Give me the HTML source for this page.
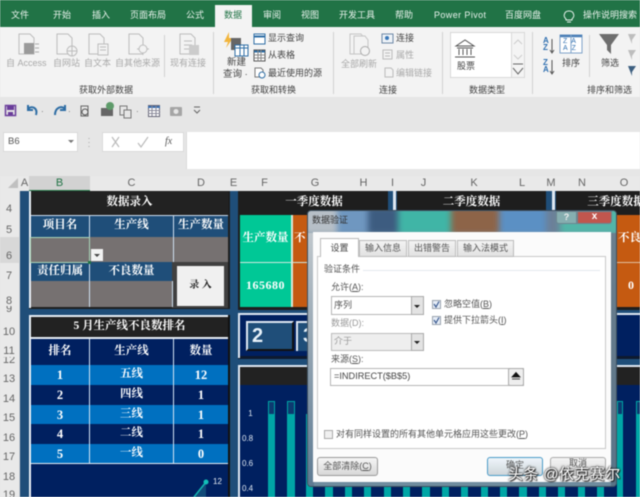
<!DOCTYPE html>
<html><head><meta charset="utf-8">
<style>
html,body{margin:0;padding:0;background:#e6e6e6}
#r{position:relative;width:640px;height:497px;overflow:hidden;font-family:"Liberation Sans","Noto Sans CJK SC",sans-serif;filter:blur(.45px)}
#r div,#r span.a{position:absolute;box-sizing:border-box}
.t{white-space:nowrap;line-height:1}
.c{text-align:center;white-space:nowrap;line-height:1}
.tab{color:#e8f2ec;font-size:9px;top:11px}
.g{color:#a9a9a9;font-size:9px}
.k{color:#444;font-size:9px}
.s{font-family:"Liberation Serif","Noto Serif CJK SC",serif;font-weight:bold;color:#fff}
.h{color:#666;font-size:11px}
.d{color:#555;font-size:9px}
.sep{background:#d0d0d0;width:1px;top:32px;height:62px}
.n{font-size:12.500px}
.x{font-size:11.500px}
svg{position:absolute;overflow:visible}
</style></head><body><div id="r">

<!-- tabs -->
<div style="left:0;top:0;width:640px;height:27px;background:#217346"></div>
<div style="left:215px;top:5px;width:37px;height:22px;background:#f3f3f3"></div>
<div class="t tab" style="left:11px">文件</div>
<div class="t tab" style="left:53px">开始</div>
<div class="t tab" style="left:92px">插入</div>
<div class="t tab" style="left:130px">页面布局</div>
<div class="t tab" style="left:186px">公式</div>
<div class="t tab" style="left:224px;color:#217346">数据</div>
<div class="t tab" style="left:263px">审阅</div>
<div class="t tab" style="left:301px">视图</div>
<div class="t tab" style="left:339px">开发工具</div>
<div class="t tab" style="left:395px">帮助</div>
<div class="t tab" style="left:434px;letter-spacing:.4px">Power Pivot</div>
<div class="t tab" style="left:505px">百度网盘</div>
<svg style="left:563px;top:9px" width="12" height="15"><path d="M3 10C1 8 1 6 1.500 5 2.500 1 9.500 1 10.500 5 11 6 11 8 9 10V11H3ZM4 13H8" fill="none" stroke="#e8f2ec"/></svg>
<div class="t tab" style="left:583px">操作说明搜索</div>

<!-- ribbon -->
<div style="left:0;top:27px;width:640px;height:70px;background:#f3f3f3"></div>
<div class="sep" style="left:213px"></div><div class="sep" style="left:333px"></div><div class="sep" style="left:442px"></div><div class="sep" style="left:532px"></div>
<div class="sep" style="left:164px;top:35px;height:42px"></div>
<div class="sep" style="left:589px;top:35px;height:42px"></div>

<!-- doc icons -->
<svg style="left:0;top:0" width="640" height="97" fill="none" stroke="#bdbdbd">
<path d="M19 34H30L34 38V54H19Z"/><rect x="24" y="43" width="10" height="11" fill="#9a9a9a" stroke="none"/><path d="M35 44H39M35 48H39M35 52H39" stroke="#aaa"/>
<path d="M57 34H68L72 38V54H57Z"/><circle cx="72" cy="51" r="5" fill="#f3f3f3"/><path d="M67 51H77M72 46V56"/>
<path d="M89 34H100L104 38V54H89Z"/><rect x="98" y="44" width="10" height="11" fill="#f3f3f3"/><path d="M100 47H106M100 50H106"/>
<path d="M129 34H139L143 38V54H129Z"/><circle cx="143" cy="49" r="4" fill="#f3f3f3"/><path d="M143 43V45M143 53V55M137 49H139M147 49H149"/>
<path d="M180 34H191L195 38V54H180ZM184 41H192M184 45H192M184 49H192"/><rect x="189" y="45" width="10" height="10" fill="#ccc" stroke="none"/>
</svg>
<div class="t g" style="left:6px;top:59px">自 Access</div>
<div class="t g" style="left:53px;top:59px">自网站</div>
<div class="t g" style="left:84px;top:59px">自文本</div>
<div class="t g" style="left:115px;top:59px">自其他来源</div>
<div class="t g" style="left:170px;top:59px">现有连接</div>
<div class="t k" style="left:79px;top:86px">获取外部数据</div>

<svg style="left:0;top:0" width="640" height="97" fill="none">
<path d="M229 32L224 42H228L226 48L233 38H229Z" fill="#f2b53c"/>
<path d="M231 38H241V50H231Z" fill="#666"/>
<rect x="235" y="45" width="13" height="11" fill="#fff" stroke="#2e6da4"/><path d="M235 48H248M240 45V56M244 45V56" stroke="#2e6da4"/>
<rect x="254" y="34" width="11" height="10" fill="#fff" stroke="#2e6da4"/><path d="M254 36.500H265" stroke="#2e6da4" stroke-width="2"/>
<rect x="254" y="50" width="11" height="11" fill="#fff" stroke="#555"/><path d="M254 51.500H265" stroke="#2e6da4" stroke-width="2"/><path d="M254 55H265M254 58H265M258 50V61M261 50V61" stroke="#888"/>
<path d="M255 68H261L263 70V77H255Z" stroke="#777" fill="#fff"/><circle cx="262" cy="75" r="3" fill="#fff" stroke="#2e6da4"/>
</svg>
<div class="t" style="left:227px;top:58px;font-size:9.500px;color:#444">新建</div>
<div class="t" style="left:223px;top:70px;font-size:9.500px;color:#444">查询 ·</div>
<div class="t k" style="left:268px;top:34px">显示查询</div>
<div class="t k" style="left:268px;top:51px">从表格</div>
<div class="t k" style="left:268px;top:69px">最近使用的源</div>
<div class="t k" style="left:251px;top:86px">获取和转换</div>

<svg style="left:0;top:0" width="640" height="97" fill="none">
<path d="M350 34H361L364 38V54H350Z" stroke="#c4c4c4"/><path d="M354 36H365L368 40V54H354Z" stroke="#c4c4c4" fill="#f3f3f3"/><circle cx="365" cy="51" r="4.500" stroke="#aaa" fill="#f3f3f3"/>
<rect x="382" y="34" width="11" height="9" fill="#eef3f8" stroke="#6c87a6"/><circle cx="387" cy="38" r="2" fill="#3b78b8"/>
<rect x="383" y="50" width="9" height="9" stroke="#bbb"/><path d="M385 53H390M385 56H390" stroke="#bbb"/>
<path d="M385 68H391L393 70V77H385Z" stroke="#bbb"/>
</svg>
<div class="t g" style="left:341px;top:60px">全部刷新</div>
<div class="t k" style="left:396px;top:34px">连接</div>
<div class="t g" style="left:396px;top:51px">属性</div>
<div class="t g" style="left:396px;top:69px">编辑链接</div>
<div class="t k" style="left:379px;top:86px">连接</div>

<div style="left:450px;top:32px;width:62px;height:46px;background:#fff;border:1px solid #d8d8d8"></div>
<div style="left:511px;top:32px;width:14px;height:46px;background:#f4f4f4;border:1px solid #d8d8d8"></div>
<svg style="left:0;top:0" width="640" height="97" fill="none">
<path d="M456 46L465 40 474 46ZM457 48H473M459 49V55M463 49V55M467 49V55M471 49V55M455 57H475" stroke="#555"/>
<path d="M514 44L518 40 522 44M514 55L518 59 522 55" stroke="#ccc"/>
<path d="M513 64H523M513 68L518 74 523 68" stroke="#666"/>
</svg>
<div class="t k" style="left:457px;top:62px">股票</div>
<div class="t k" style="left:469px;top:86px">数据类型</div>

<div class="t" style="left:543px;top:37px;font-size:8px;font-weight:bold;color:#2f6fb0;line-height:7px">A<br>Z</div>
<div class="t" style="left:543px;top:59px;font-size:8px;font-weight:bold;color:#2f6fb0;line-height:7px">Z<br>A</div>
<svg style="left:0;top:0" width="640" height="97" fill="none">
<path d="M552 39V52M550 50L552 53 554 50M552 60V73M550 71L552 74 554 71" stroke="#555"/>
<rect x="560" y="35" width="22" height="18" fill="#fff" stroke="#7fa3c9"/><path d="M560 36H582" stroke="#4a7fb6" stroke-width="2.500"/><path d="M571 35V53" stroke="#7fa3c9"/>
<path d="M599 34H619L611 45V54L607 50V45Z" fill="#6e6e6e"/>
<path d="M628 34H636L632 40V44Z" fill="#bdbdbd"/><path d="M628 50H636L632 56V60Z" fill="#bdbdbd"/><path d="M628 66H636L632 72V76Z" fill="#3d5f80"/>
</svg>
<div class="t" style="left:563px;top:38px;font-size:7px;color:#2f6fb0;line-height:7px;letter-spacing:4px">ZA<br>AZ</div>
<div class="t k" style="left:562px;top:59px">排序</div>
<div class="t k" style="left:601px;top:59px">筛选</div>
<div class="t k" style="left:587px;top:86px">排序和筛选</div>

<!-- qat -->
<svg style="left:0;top:0" width="640" height="130" fill="none">
<rect x="5.500" y="105.500" width="10" height="10" stroke="#6a3d9a" stroke-width="1.500"/><path d="M7 106H14V110H7Z" fill="#6a3d9a"/><rect x="8" y="112" width="5" height="3" fill="#6a3d9a"/>
<path d="M28 109C32 105 38 108 36 115M28 105V110H33" stroke="#2e6da4" stroke-width="2"/>
<path d="M65 109C61 105 55 108 55 115M65 105V110H60" stroke="#2e6da4" stroke-width="2"/>
<path d="M81 106H88V116H81Z" stroke="#666"/><circle cx="85" cy="112" r="3" stroke="#555" fill="#e6e6e6"/>
<path d="M101 108H113V116H101Z" fill="#666"/><circle cx="110" cy="106" r="4" fill="#5e9b6a"/>
<path d="M120 106H127V115H120Z" stroke="#777"/><path d="M124 110H131V118H124Z" stroke="#777" fill="#e6e6e6"/>
<rect x="148.500" y="105.500" width="11" height="11" fill="#fff" stroke="#667"/><path d="M148 107H160" stroke="#3b6fb0" stroke-width="2"/><path d="M148 110.500H160M148 113.500H160M152 106V116M156 106V116" stroke="#889"/>
<rect x="170" y="107" width="12" height="9" fill="#a5a5a5" rx="1"/><circle cx="176" cy="111.500" r="2.500" fill="#e6e6e6"/>
<path d="M194 107H200M194 110L197 113 200 110" stroke="#666"/>
</svg>
<div class="t" style="left:41px;top:108px;font-size:8px;color:#666">·</div>
<div class="t" style="left:68px;top:108px;font-size:8px;color:#666">·</div>
<div class="t" style="left:136px;top:108px;font-size:8px;color:#666">·</div>

<!-- formula bar -->
<div style="left:3px;top:132px;width:75px;height:20px;background:#fff;border:1px solid #dadada"></div>
<div class="t" style="left:8px;top:137px;font-size:9.500px;color:#555">B6</div>
<svg style="left:0;top:0" width="640" height="170"><path d="M68 140H74L71 143Z" fill="#777"/>
<path d="M112 137L119 147M119 137L112 147" stroke="#bbb" fill="none" stroke-width="1.200"/><path d="M138 143L141 147 148 137" stroke="#bbb" fill="none" stroke-width="1.200"/>
<path d="M89 138V139M89 142V143M89 146V147" stroke="#aaa"/></svg>
<div style="left:102px;top:132px;width:82px;height:20px;background:#fff;border:1px solid #dadada"></div>
<svg style="left:0;top:0" width="640" height="170"><path d="M112 137L119 147M119 137L112 147" stroke="#bbb" fill="none" stroke-width="1.200"/><path d="M138 143L141 147 148 137" stroke="#bbb" fill="none" stroke-width="1.200"/></svg>
<div class="t" style="left:165px;top:137px;font-size:10px;font-style:italic;font-family:'Liberation Serif',serif;color:#555">fx</div>
<div style="left:186px;top:132px;width:454px;height:37px;background:#fff;border-left:1px solid #dadada"></div>

<!-- col/row headers -->
<div style="left:0;top:176px;width:640px;height:15px;background:#e9e9e9"></div>
<div style="left:0;top:176px;width:20px;height:321px;background:#e9e9e9"></div>
<div style="left:29px;top:176px;width:61px;height:15px;background:#d2d2d2;border-bottom:1px solid #217346"></div>
<div style="left:19px;top:191px;width:2px;height:306px;background:#d8d8d8"></div>
<div style="left:0;top:237px;width:20px;height:26px;background:#d8d8d8"></div>
<svg style="left:0;top:0" width="640" height="497"><path d="M8 188L18 178V188Z" fill="#c0c0c0"/></svg>
<div class="c h" style="left:20px;top:178px;width:9px">A</div>
<div class="c h" style="left:29px;top:178px;width:61px;color:#217346">B</div>
<div class="c h" style="left:90px;top:178px;width:83px">C</div>
<div class="c h" style="left:173px;top:178px;width:56px">D</div>
<div class="c h" style="left:229px;top:178px;width:9px">E</div>
<div class="c h" style="left:238px;top:178px;width:53px">F</div>
<div class="c h" style="left:291px;top:178px;width:48px">G</div>
<div class="c h" style="left:339px;top:178px;width:49px">H</div>
<div class="c h" style="left:388px;top:178px;width:9px">I</div>
<div class="c h" style="left:397px;top:178px;width:53px">J</div>
<div class="c h" style="left:450px;top:178px;width:48px">K</div>
<div class="c h" style="left:498px;top:178px;width:48px">L</div>
<div class="c h" style="left:546px;top:178px;width:10px">M</div>
<div class="c h" style="left:556px;top:178px;width:52px">N</div>
<div class="c h" style="left:608px;top:178px;width:32px">O</div>
<div class="c h" style="left:0;top:204px;width:18px">4</div>
<div class="c h" style="left:0;top:225px;width:18px">5</div>
<div class="c h" style="left:0;top:251px;width:18px">6</div>
<div class="c h" style="left:0;top:271px;width:18px">7</div>
<div class="c h" style="left:0;top:296px;width:18px">8</div>
<div class="c h" style="left:0;top:306px;width:18px;height:6px;overflow:hidden;line-height:6px">9</div>
<div class="c h" style="left:0;top:327px;width:18px">10</div>
<div class="c h" style="left:0;top:346px;width:18px">11</div>
<div class="c h" style="left:0;top:357px;width:18px;height:6px;overflow:hidden;line-height:6px">12</div>
<div class="c h" style="left:0;top:374px;width:18px">13</div>
<div class="c h" style="left:0;top:394px;width:18px">14</div>
<div class="c h" style="left:0;top:413px;width:18px">15</div>
<div class="c h" style="left:0;top:433px;width:18px">16</div>
<div class="c h" style="left:0;top:452px;width:18px">17</div>
<div class="c h" style="left:0;top:472px;width:18px">18</div>
<div class="c h" style="left:0;top:490px;width:18px">19</div>

<!-- sheet -->
<div style="left:20px;top:191px;width:620px;height:306px;background:#1f4e79"></div>

<!-- panel 1 -->
<div style="left:29px;top:191px;width:201px;height:118px;background:#1e1e1e"></div>
<div style="left:29px;top:191px;width:2px;height:117px;background:#e8eef5"></div>
<div style="left:31px;top:192px;width:197px;height:22px;background:#222"></div>
<div class="c s" style="left:31px;top:197px;width:197px;font-size:11.500px">数据录入</div>
<div style="left:31px;top:215px;width:197px;height:22px;background:#1f4e79;border-top:1px solid #cfe0f0"></div>
<div style="left:31px;top:237px;width:197px;height:25px;background:#767171"></div>
<div style="left:31px;top:262px;width:141px;height:19px;background:#1f4e79"></div>
<div style="left:31px;top:281px;width:141px;height:26px;background:#767171"></div>
<div style="left:172px;top:262px;width:56px;height:46px;background:#404040"></div>
<div style="left:89px;top:216px;width:1px;height:91px;background:#cfe0f0"></div>
<div style="left:173px;top:216px;width:1px;height:46px;background:#cfe0f0"></div>
<div style="left:172px;top:281px;width:1px;height:26px;background:#cfe0f0"></div>
<div class="c s" style="left:31px;top:220px;width:58px;font-size:11.500px">项目名</div>
<div class="c s" style="left:90px;top:220px;width:83px;font-size:11.500px">生产线</div>
<div class="c s" style="left:174px;top:220px;width:54px;font-size:11.500px">生产数量</div>
<div class="c s" style="left:31px;top:266px;width:58px;font-size:11.500px">责任归属</div>
<div class="c s" style="left:90px;top:266px;width:83px;font-size:11.500px">不良数量</div>
<div style="left:30px;top:237px;width:60px;height:26px;border:1px solid #a9d5b8"></div>
<div style="left:88px;top:261px;width:3px;height:3px;background:#217346"></div>
<div style="left:91px;top:249px;width:12px;height:12px;background:#f2f2f2"></div>
<svg style="left:0;top:0" width="640" height="300"><path d="M94 254H100L97 257Z" fill="#444"/></svg>
<div style="left:177px;top:266px;width:47px;height:40px;background:#f0f0f0"></div>
<div class="c" style="left:177px;top:281px;width:47px;font-size:10px;font-weight:bold;font-family:'Liberation Serif','Noto Serif CJK SC',serif;color:#222">录 入</div>

<!-- panel 2 -->
<div style="left:29px;top:315px;width:201px;height:182px;background:#e8eef5"></div>
<div style="left:228px;top:315px;width:2px;height:182px;background:#111"></div>
<div style="left:31px;top:317px;width:197px;height:20px;background:#222"></div>
<div class="c s" style="left:31px;top:321px;width:197px;font-size:11.500px">5 月生产线不良数排名</div>
<div style="left:31px;top:339px;width:197px;height:26px;background:#002060"></div>
<div style="left:31px;top:365px;width:197px;height:20px;background:#0070c0"></div>
<div style="left:31px;top:385px;width:197px;height:20px;background:#002060"></div>
<div style="left:31px;top:405px;width:197px;height:19px;background:#0070c0"></div>
<div style="left:31px;top:424px;width:197px;height:20px;background:#002060"></div>
<div style="left:31px;top:444px;width:197px;height:19px;background:#0070c0"></div>
<div style="left:31px;top:464px;width:197px;height:33px;background:#002060"></div>
<div style="left:89px;top:339px;width:1px;height:124px;background:#d5e5f5"></div>
<div style="left:173px;top:339px;width:1px;height:124px;background:#d5e5f5"></div>
<div class="c s" style="left:31px;top:346px;width:58px;font-size:11.500px">排名</div>
<div class="c s" style="left:90px;top:346px;width:83px;font-size:11.500px">生产线</div>
<div class="c s" style="left:174px;top:346px;width:54px;font-size:11.500px">数量</div>
<div class="c s n" style="left:31px;top:369px;width:58px">1</div><div class="c s x" style="left:90px;top:369px;width:83px">五线</div><div class="c s n" style="left:174px;top:369px;width:54px">12</div>
<div class="c s n" style="left:31px;top:389px;width:58px">2</div><div class="c s x" style="left:90px;top:389px;width:83px">四线</div><div class="c s n" style="left:174px;top:389px;width:54px">1</div>
<div class="c s n" style="left:31px;top:409px;width:58px">3</div><div class="c s x" style="left:90px;top:409px;width:83px">三线</div><div class="c s n" style="left:174px;top:409px;width:54px">1</div>
<div class="c s n" style="left:31px;top:428px;width:58px">4</div><div class="c s x" style="left:90px;top:428px;width:83px">二线</div><div class="c s n" style="left:174px;top:428px;width:54px">1</div>
<div class="c s n" style="left:31px;top:448px;width:58px">5</div><div class="c s x" style="left:90px;top:448px;width:83px">一线</div><div class="c s n" style="left:174px;top:448px;width:54px">0</div>
<svg style="left:0;top:0" width="640" height="497"><path d="M206 482L194 497H206Z" fill="#114a78"/><path d="M206 482L194 497" stroke="#12b5b0" stroke-width="1.500"/><circle cx="206" cy="482" r="2.500" fill="#12c0b8"/></svg>
<div class="t" style="left:213px;top:478px;font-size:8px;color:#e8eef5">12</div>

<!-- top quarter panels -->
<div style="left:238px;top:191px;width:402px;height:119px;background:#1e1e1e"></div>
<div style="left:388px;top:191px;width:9px;height:119px;background:#1f4e79"></div>
<div style="left:393px;top:191px;width:3px;height:119px;background:#dfe8f2"></div>
<div style="left:546px;top:191px;width:10px;height:119px;background:#1f4e79"></div>
<div style="left:552px;top:191px;width:3px;height:119px;background:#dfe8f2"></div>
<div class="c s" style="left:240px;top:197px;width:148px;font-size:11.500px">一季度数据</div>
<div class="c s" style="left:397px;top:197px;width:149px;font-size:11.500px">二季度数据</div>
<div class="c s" style="left:556px;top:197px;width:120px;font-size:11.500px">三季度数据</div>
<div style="left:240px;top:215px;width:52px;height:92px;background:#00c896"></div>
<div style="left:292px;top:215px;width:96px;height:92px;background:#c55a11"></div>
<div style="left:240px;top:262px;width:148px;height:1px;background:#cfe9e0"></div>
<div style="left:291px;top:215px;width:2px;height:92px;background:#d8e8d8"></div>
<div class="c s" style="left:240px;top:233px;width:51px;font-size:11.500px">生产数量</div>
<div class="t s" style="left:294px;top:233px;font-size:11.500px">不</div>
<div class="c s" style="left:240px;top:279px;width:51px;font-size:12px;letter-spacing:.5px">165680</div>
<div style="left:617px;top:215px;width:23px;height:92px;background:#c55a11"></div>
<div style="left:617px;top:262px;width:23px;height:1px;background:#e0c0a0"></div>
<div class="t s" style="left:618px;top:233px;font-size:11.500px">不良数</div>
<div class="t s" style="left:628px;top:279px;font-size:12px">0</div>

<!-- numbers panel -->
<div style="left:238px;top:313px;width:402px;height:46px;background:#002060;border-top:2px solid #dfe8f2;border-bottom:3px solid #0e1a2e"></div>
<div style="left:238px;top:313px;width:2px;height:45px;background:#dfe8f2"></div>
<div style="left:246px;top:321px;width:48px;height:30px;background:#1f4e79;border-top:2px solid #dfe8f2;border-left:2px solid #dfe8f2;border-right:2px solid #111;border-bottom:2px solid #111"></div>
<div style="left:296px;top:321px;width:40px;height:30px;background:#1f4e79;border-top:2px solid #dfe8f2;border-left:2px solid #dfe8f2"></div>
<div class="t" style="left:252px;top:326px;font-size:20px;font-weight:bold;color:#e8f2fa">2</div>
<div class="t" style="left:303px;top:326px;font-size:20px;font-weight:bold;color:#e8f2fa">3</div>

<!-- chart panel -->
<div style="left:238px;top:365px;width:402px;height:132px;background:#002060;border-top:2px solid #dfe8f2;border-left:2px solid #dfe8f2"></div>
<div style="left:240px;top:367px;width:400px;height:18px;background:#222"></div>
<div class="t" style="left:246px;top:410px;font-size:8px;color:#dfe8f2">&nbsp;1</div>
<div class="t" style="left:242px;top:435px;font-size:8px;color:#dfe8f2">0.8</div>
<div class="t" style="left:242px;top:460px;font-size:8px;color:#dfe8f2">0.6</div>
<div class="t" style="left:242px;top:485px;font-size:8px;color:#dfe8f2">0.4</div>
<svg style="left:0;top:0" width="640" height="497">
<g fill="#00a6a6">
<rect x="268" y="414" width="7" height="83"/><rect x="287" y="414" width="8" height="83"/><rect x="306" y="414" width="7" height="83"/>
<rect x="325" y="414" width="8" height="83"/><rect x="345" y="414" width="7" height="83"/><rect x="364" y="414" width="7" height="83"/>
<rect x="384" y="414" width="7" height="83"/><rect x="403" y="414" width="7" height="83"/><rect x="422" y="414" width="8" height="83"/>
<rect x="442" y="414" width="7" height="83"/><rect x="461" y="414" width="7" height="83"/><rect x="481" y="414" width="7" height="83"/>
<rect x="500" y="414" width="7" height="83"/><rect x="519" y="414" width="8" height="83"/><rect x="539" y="414" width="7" height="83"/>
<rect x="558" y="414" width="7" height="83"/><rect x="578" y="414" width="7" height="83"/><rect x="597" y="414" width="7" height="83"/>
<rect x="617" y="414" width="6" height="83"/><rect x="636" y="414" width="4" height="83"/>
</g>
<g fill="#0d3a70" stroke="#00a6a6">
<rect x="268.500" y="401.500" width="6" height="13"/><rect x="287.500" y="401.500" width="7" height="13"/>
<rect x="617.500" y="401.500" width="5" height="13"/><rect x="636.500" y="401.500" width="5" height="13"/>
</g>
</svg>

<!-- dialog frame -->
<div style="left:307px;top:210px;width:310px;height:277px;background:#6f8c9e;border:1px solid #3d4f5f;border-radius:4px;overflow:hidden">
 <div style="left:-4px;top:-4px;width:318px;height:27px;display:block;filter:blur(3px);background:linear-gradient(90deg,#b7bfc7 0,#b7bfc7 32px,#6f97c0 34px,#6f97c0 62px,#3d5c80 66px,#3d5c80 92px,#40b5a6 96px,#40b5a6 145px,#8d6448 149px,#8d6448 193px,#5b90c4 197px,#5b90c4 240px,#6b8098 244px,#6b8098 254px,#52b5a8 258px)"></div>
 <div style="left:0;top:22px;width:6px;height:255px;background:linear-gradient(#c0c7cc,#5d7a92)"></div>
 <div style="left:303px;top:22px;width:7px;height:255px;background:linear-gradient(#6b7f8e,#5a7488)"></div>
</div>
<div class="t" style="left:312px;top:216px;font-size:9px;color:#333">数据验证</div>
<div style="left:556px;top:211px;width:21px;height:13px;background:#86aeb0;border:1px solid #6d8590;border-radius:0 0 0 3px"></div>
<div style="left:577px;top:211px;width:35px;height:13px;background:#c0564e;border:1px solid #6d8590;border-radius:0 0 3px 0"></div>
<div class="c" style="left:556px;top:213px;width:21px;font-size:9px;font-weight:bold;color:#eee">?</div>
<div class="c" style="left:577px;top:212px;width:35px;font-size:10px;font-weight:bold;color:#fff">x</div>

<div style="left:313px;top:232px;width:298px;height:250px;background:#fbfbfb"></div>
<div style="left:317px;top:256px;width:289px;height:193px;background:#fff;border:1px solid #c8c8c8"></div>
<div style="left:359px;top:240px;width:48px;height:17px;background:linear-gradient(#f3f3f3,#e2e2e2);border:1px solid #bbb"></div>
<div style="left:408px;top:240px;width:48px;height:17px;background:linear-gradient(#f3f3f3,#e2e2e2);border:1px solid #bbb"></div>
<div style="left:457px;top:240px;width:57px;height:17px;background:linear-gradient(#f3f3f3,#e2e2e2);border:1px solid #bbb"></div>
<div style="left:320px;top:238px;width:39px;height:19px;background:#fff;border:1px solid #bbb;border-bottom:0"></div>
<div class="c d" style="left:320px;top:244px;width:39px;color:#444">设置</div>
<div class="c d" style="left:359px;top:244px;width:48px">输入信息</div>
<div class="c d" style="left:408px;top:244px;width:48px">出错警告</div>
<div class="c d" style="left:457px;top:244px;width:57px">输入法模式</div>
<div class="t d" style="left:324px;top:265px">验证条件</div>
<div style="left:363px;top:270px;width:237px;height:1px;background:#e4e8ee"></div>
<div class="t d" style="left:331px;top:283px">允许(<u>A</u>):</div>
<div style="left:331px;top:296px;width:93px;height:19px;background:#fff;border:1px solid #b5b5b5"></div>
<div style="left:411px;top:296px;width:13px;height:19px;background:#e3e3e3;border:1px solid #aaa"></div>
<div class="t d" style="left:334px;top:301px">序列</div>
<div class="t d" style="left:331px;top:319px;color:#999">数据(D):</div>
<div style="left:331px;top:333px;width:93px;height:18px;background:#eee;border:1px solid #bbb"></div>
<div style="left:411px;top:333px;width:13px;height:18px;background:#e3e3e3;border:1px solid #aaa"></div>
<div class="t d" style="left:334px;top:337px;color:#999">介于</div>
<div class="t d" style="left:331px;top:355px">来源(<u>S</u>):</div>
<div style="left:330px;top:368px;width:194px;height:18px;background:#fff;border:1px solid #b5b5b5"></div>
<div class="t" style="left:334px;top:372px;font-size:9.200px;color:#444">=INDIRECT($B$5)</div>
<div style="left:508px;top:368px;width:16px;height:18px;background:#eee;border:1px solid #aaa;border-radius:2px"></div>
<svg style="left:0;top:0" width="640" height="497">
<path d="M414 305H420L417 308ZM414 341H420L417 344Z" fill="#222"/>
<path d="M512 377H520L516 372.500ZM512 379H520" fill="#111" stroke="#111" stroke-width=".8"/>
<rect x="432.500" y="300.500" width="8" height="8" fill="#e6edf7" stroke="#9aa3ae"/><path d="M434 304L436 307 439 301.500" fill="none" stroke="#3a5a90" stroke-width="1.200"/>
<rect x="432.500" y="316.500" width="8" height="8" fill="#e6edf7" stroke="#9aa3ae"/><path d="M434 320L436 323 439 317.500" fill="none" stroke="#3a5a90" stroke-width="1.200"/>
<rect x="324.500" y="430.500" width="8" height="8" fill="#f0f0f0" stroke="#aaa"/>
</svg>
<div class="t d" style="left:444px;top:300px">忽略空值(<u>B</u>)</div>
<div class="t d" style="left:444px;top:316px">提供下拉箭头(<u>I</u>)</div>
<div class="t d" style="left:336px;top:430px">对有同样设置的所有其他单元格应用这些更改(<u>P</u>)</div>
<div style="left:317px;top:457px;width:61px;height:19px;background:linear-gradient(#f5f5f5,#d8d8d8);border:1px solid #999;border-radius:3px"></div>
<div class="c d" style="left:317px;top:462px;width:61px">全部清除(<u>C</u>)</div>
<div style="left:487px;top:457px;width:56px;height:19px;background:linear-gradient(#eef5fa,#cfd6da);border:1px solid #4a9bc8;border-radius:3px"></div>
<div class="c d" style="left:487px;top:461px;width:56px">确定</div>
<div style="left:550px;top:457px;width:56px;height:19px;background:linear-gradient(#f5f5f5,#d8d8d8);border:1px solid #aaa;border-radius:3px"></div>
<div class="c d" style="left:550px;top:459px;width:56px">取消</div>

<!-- watermark -->
<div class="t" style="left:508px;top:467px;font-size:15px;letter-spacing:.4px;color:#fff;text-shadow:0 0 2px #222,0 0 2px #222,1px 1px 1px #222">头条 @依克赛尔</div>

</div></body></html>
